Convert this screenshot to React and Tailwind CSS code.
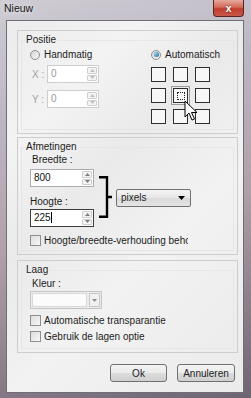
import React from "react";

const Arrow = ({ up, color }) => (
  <svg width="5" height="3" viewBox="0 0 5 3">
    <path d={up ? "M0 3 L2.5 0 L5 3Z" : "M0 0 L2.5 3 L5 0Z"} fill={color} />
  </svg>
);

const Spin = ({ disabled }) => {
  const c = disabled ? "#c0c0c0" : "#7d7d7d";
  return (
    <div className="flex flex-col w-[11px] h-full py-[1px] pr-[1px] gap-[1px]">
      <div className="flex-1 border border-[#cfcfcf] bg-[#f3f3f3] rounded-[1px] flex items-center justify-center">
        <Arrow up color={c} />
      </div>
      <div className="flex-1 border border-[#cfcfcf] bg-[#f3f3f3] rounded-[1px] flex items-center justify-center">
        <Arrow color={c} />
      </div>
    </div>
  );
};

const NumInput = ({ value, width, disabled, focused, caret }) => (
  <div
    className={`flex h-[18px] bg-white border ${
      disabled ? "border-[#cdcdcd]" : focused ? "border-[#3d3d3d]" : "border-[#abadb3]"
    }`}
    style={{ width }}
  >
    <div className={`flex-1 pl-[3px] leading-[16px] ${disabled ? "text-[#9a9a9a]" : "text-[#111]"}`}>
      {value}
      {caret && <span className="inline-block w-[1px] h-[11px] bg-black align-[-2px]" />}
    </div>
    <Spin disabled={disabled} />
  </div>
);

const Radio = ({ checked, label }) => (
  <div className="flex items-center h-[13px] gap-[4px]">
    <div className="w-[10px] h-[10px] rounded-full border border-[#8c8f94] bg-[linear-gradient(135deg,#d6d6d6,#f6f6f6)] flex items-center justify-center">
      {checked && <div className="w-[5px] h-[5px] rounded-full bg-[radial-gradient(circle_at_35%_35%,#8fd0f5,#1b5f99)]" />}
    </div>
    <span>{label}</span>
  </div>
);

const Check = ({ label, clip }) => (
  <div className="flex items-center h-[12px] gap-[3px]">
    <div className="w-[11px] h-[11px] border border-[#8e8f8f] bg-[linear-gradient(135deg,#dcdcdc,#f8f8f8)] shrink-0" />
    <span className={clip ? "w-[144px] overflow-hidden whitespace-nowrap" : "whitespace-nowrap"}>{label}</span>
  </div>
);

const Group = ({ title, height, children }) => (
  <div className="border border-[#cdcdcd] p-[3px] w-[221px]" style={{ height }}>
    <fieldset className="h-full border border-[#e6e6e6] px-0">
      <legend className="ml-[3px] px-[1px] leading-[12px]">{title}</legend>
      <div className="pl-[8px]">{children}</div>
    </fieldset>
  </div>
);

const Square = ({ active }) => (
  <div
    className={`w-[15px] h-[15px] border border-[#2e2e2e] bg-[#f7f7f7] flex items-center justify-center ${
      active ? "outline outline-1 outline-[#9a9a9a] outline-offset-[1px]" : ""
    }`}
  >
    {active && <div className="w-[8px] h-[8px] border border-dotted border-[#222]" />}
  </div>
);

export default function App() {
  return (
    <div className="w-[251px] h-[398px] overflow-hidden bg-[linear-gradient(165deg,#cfccd4_0%,#bdb7c2_25%,#b19fab_55%,#6d6570_100%)] font-['Liberation_Sans',Arial,sans-serif] text-[10px] text-[#1c1c1c]">
      <div className="flex justify-between h-[20px]">
        <span className="pl-[4px] pt-[2px] text-[10.5px] leading-[12px] text-[#151515] [text-shadow:0_0_6px_#ffffff]">Nieuw</span>
        <div className="mr-[7px] w-[31px] h-[17px] rounded-b-[4px] border border-t-0 border-[#5a2424] bg-[linear-gradient(180deg,#e6a99c_0%,#d46a5a_45%,#c13d2c_55%,#c9584a_100%)] flex items-center justify-center">
          <span className="text-white font-bold text-[11px] leading-[11px] [text-shadow:0_0_2px_#5a1a1a]">x</span>
        </div>
      </div>
      <div className="ml-[6px] w-[238px] h-[373px] border border-[#6f6d76] bg-[linear-gradient(135deg,#ececec_0%,#f3f3f3_22%,#eaeaea_40%,#f2f2f2_62%,#ebebeb_100%)] pt-[9px] pl-[10px]">
        <Group title="Positie" height={104}>
          <div className="flex">
            <div className="w-[121px]">
              <div className="mt-[2px]">
                <Radio label="Handmatig" />
              </div>
              <div className="flex items-center mt-[4px]">
                <span className="w-[17px] pl-[2px] text-[#a3a3a3]">X :</span>
                <NumInput value="0" width={52} disabled />
              </div>
              <div className="flex items-center mt-[7px]">
                <span className="w-[17px] pl-[2px] text-[#a3a3a3]">Y :</span>
                <NumInput value="0" width={52} disabled />
              </div>
            </div>
            <div>
              <div className="mt-[2px]">
                <Radio checked label="Automatisch" />
              </div>
              <div className="relative mt-[6px] grid grid-cols-[15px_15px_15px] gap-x-[7px] gap-y-[6px]">
                <Square />
                <Square />
                <Square />
                <Square />
                <Square active />
                <Square />
                <Square />
                <Square />
                <Square />
                <svg className="absolute left-[33px] top-[33px]" width="14" height="22" viewBox="0 0 14 22">
                  <path d="M1 1 L1 17 L5 13 L8 20 L10.5 19 L7.5 12.5 L13 12.5 Z" fill="#fff" stroke="#000" strokeWidth="1" strokeLinejoin="round" />
                </svg>
              </div>
            </div>
          </div>
        </Group>
        <div className="mt-[3px]">
          <Group title="Afmetingen" height={118}>
            <div className="flex">
              <div className="w-[64px]">
                <div className="mt-[1px] pl-[2px] leading-[12px]">Breedte :</div>
                <div className="mt-[3px]">
                  <NumInput value="800" width={64} />
                </div>
                <div className="mt-[9px] leading-[12px]">Hoogte :</div>
                <div className="mt-[1px]">
                  <NumInput value="225" width={64} focused caret />
                </div>
              </div>
              <svg className="ml-[5px] mt-[23px]" width="14" height="42" viewBox="0 0 14 42">
                <path d="M0 1.2 H8 V40.8 H0 M8 21 H13" fill="none" stroke="#000" strokeWidth="2.4" />
              </svg>
              <div className="ml-[3px] mt-[36px] w-[75px] h-[18px] border border-[#707070] rounded-[2px] bg-[linear-gradient(180deg,#f4f4f4,#e6e6e6_50%,#dadada_51%,#e4e4e4)] flex items-center justify-between pl-[4px] pr-[5px]">
                <span className="leading-[12px]">pixels</span>
                <svg width="7" height="4" viewBox="0 0 7 4">
                  <path d="M0 0 L3.5 4 L7 0Z" fill="#000" />
                </svg>
              </div>
            </div>
            <div className="mt-[7px]">
              <Check label="Hoogte/breedte-verhouding behouden" clip />
            </div>
          </Group>
        </div>
        <div className="mt-[5px]">
          <Group title="Laag" height={93}>
            <div className="mt-[2px] pl-[2px] leading-[12px]">Kleur :</div>
            <div className="mt-[1px] w-[72px] h-[18px] border border-[#c4c4c4] bg-[#ececec] flex items-stretch p-[1px] gap-[2px]">
              <div className="flex-1 bg-[#fbfbfb] border border-[#d8d8d8]" />
              <div className="w-[11px] border border-[#c8c8c8] bg-[#f1f1f1] flex items-center justify-center">
                <Arrow color="#8a8a8a" />
              </div>
            </div>
            <div className="mt-[5px]">
              <Check label="Automatische transparantie" />
            </div>
            <div className="mt-[4px]">
              <Check label="Gebruik de lagen optie" />
            </div>
          </Group>
        </div>
        <div className="flex justify-end gap-[10px] mt-[11px] pr-[8px]">
          <div className="w-[57px] h-[18px] border border-[#707070] rounded-[3px] bg-[linear-gradient(180deg,#f3f3f3,#ebebeb_50%,#dddddd_51%,#cfcfcf)] flex items-center justify-center">
            Ok
          </div>
          <div className="w-[58px] h-[18px] border border-[#707070] rounded-[3px] bg-[linear-gradient(180deg,#f3f3f3,#ebebeb_50%,#dddddd_51%,#cfcfcf)] flex items-center justify-center">
            Annuleren
          </div>
        </div>
      </div>
    </div>
  );
}
